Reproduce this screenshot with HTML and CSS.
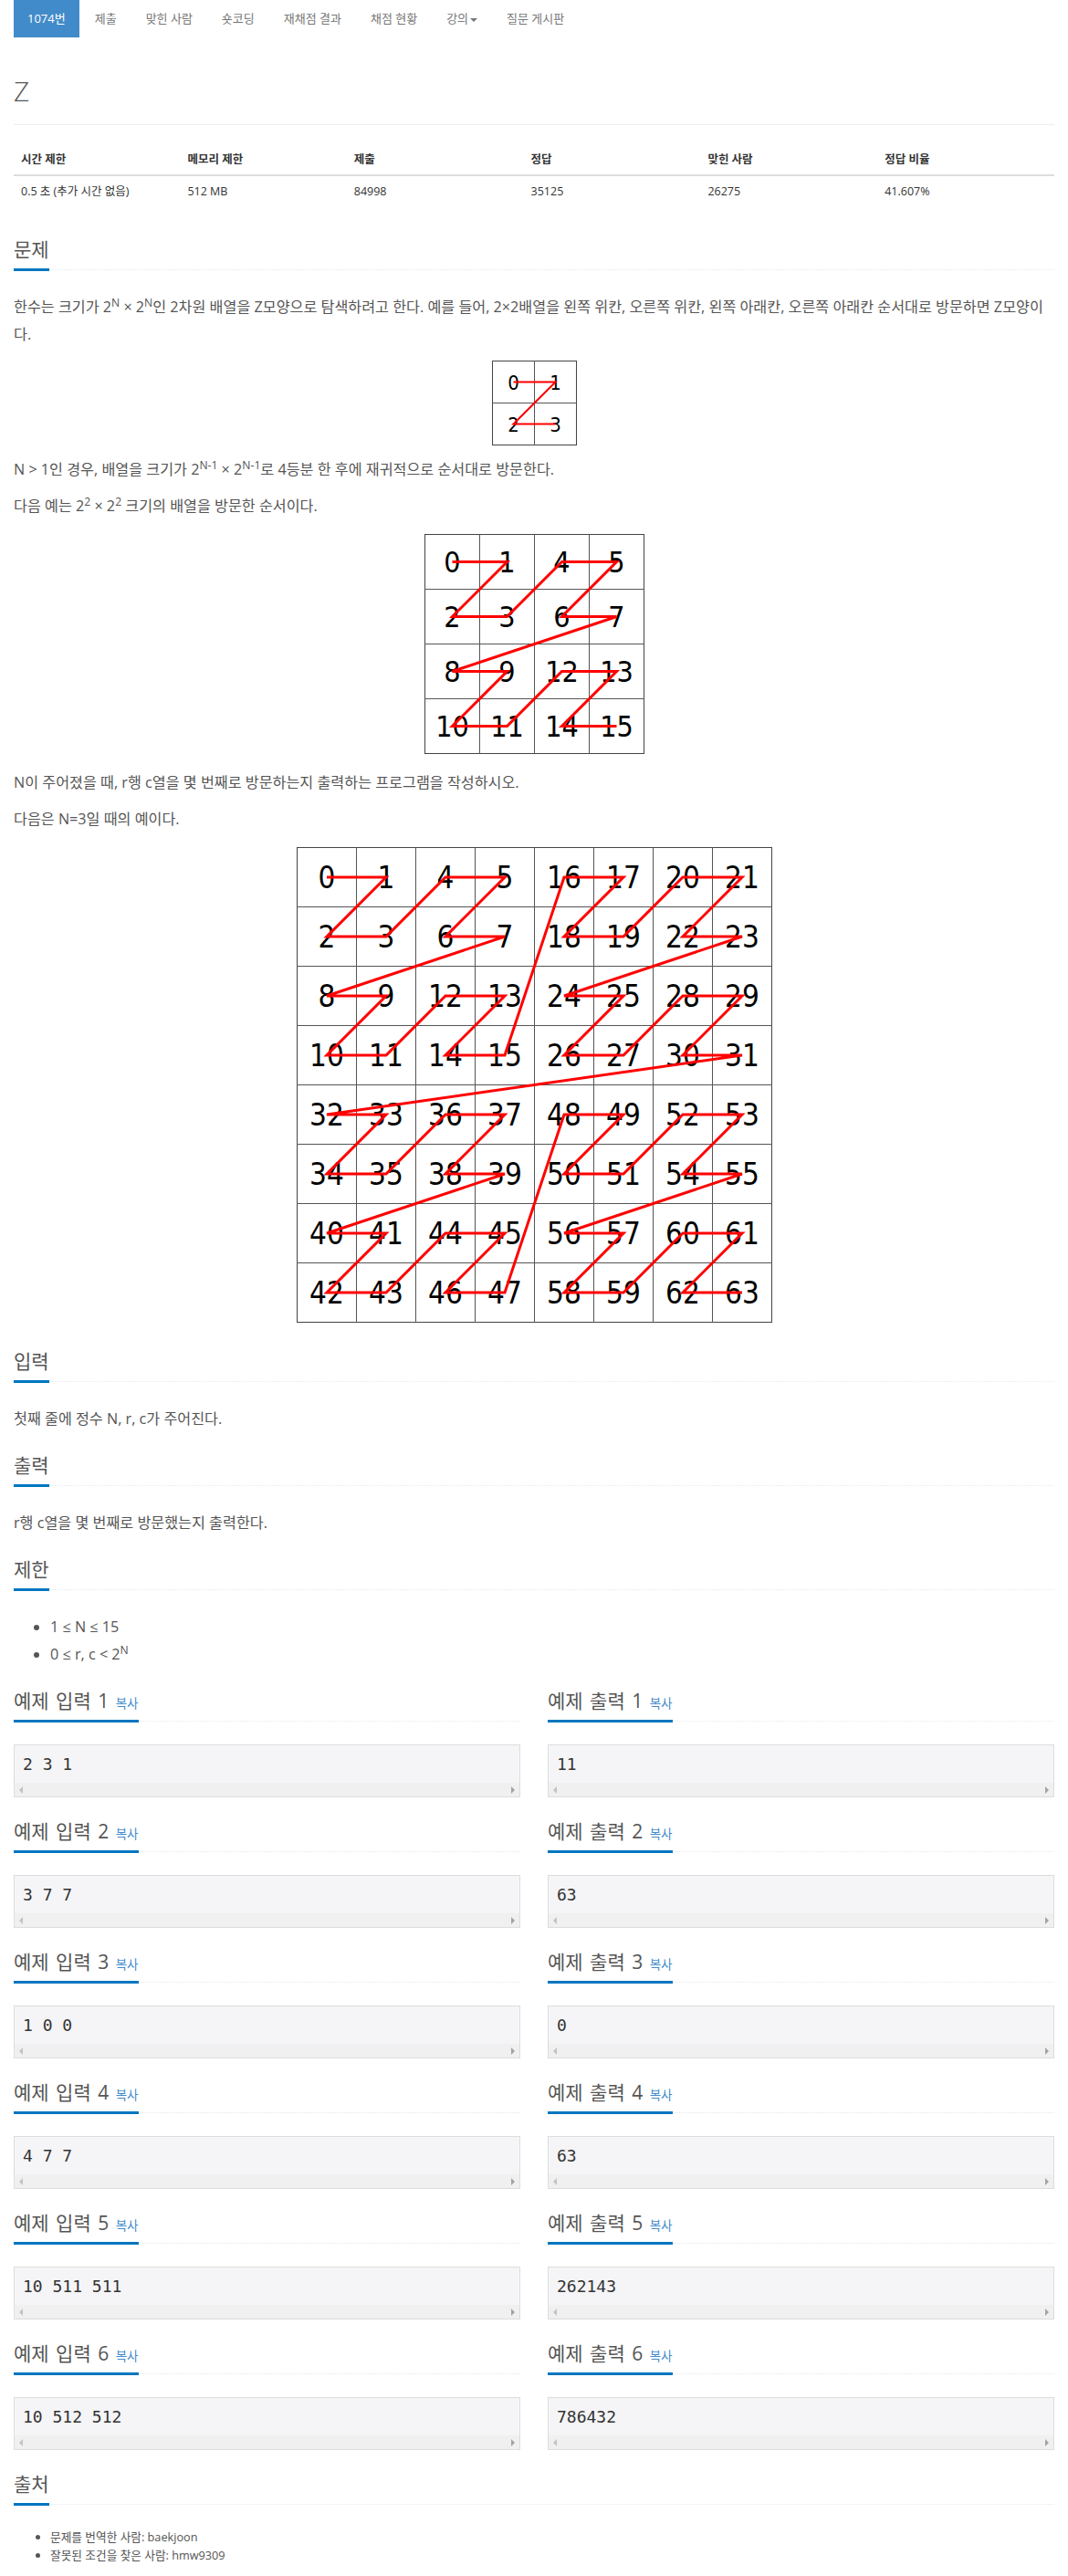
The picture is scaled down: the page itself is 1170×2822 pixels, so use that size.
FILE: index.html
```html
<!DOCTYPE html>
<html lang="ko">
<head>
<meta charset="utf-8">
<title>Z</title>
<link rel="stylesheet" href="styles.css">
</head>
<body>
<div class="container">
  <ul class="menu">
    <li class="active"><a>1074번</a></li>
    <li><a>제출</a></li>
    <li><a>맞힌 사람</a></li>
    <li><a>숏코딩</a></li>
    <li><a>재채점 결과</a></li>
    <li><a>채점 현황</a></li>
    <li><a>강의<span class="caret"></span></a></li>
    <li><a>질문 게시판</a></li>
  </ul>

  <div class="page-header"><h1>Z</h1></div>

  <table class="info">
    <thead>
      <tr>
        <th class="c16">시간 제한</th>
        <th class="c16">메모리 제한</th>
        <th class="c17">제출</th>
        <th class="c17">정답</th>
        <th class="c17">맞힌 사람</th>
        <th class="c17">정답 비율</th>
      </tr>
    </thead>
    <tbody>
      <tr>
        <td>0.5 초 (추가 시간 없음)</td>
        <td>512 MB</td>
        <td>84998</td>
        <td>35125</td>
        <td>26275</td>
        <td>41.607%</td>
      </tr>
    </tbody>
  </table>

  <section class="sec">
    <div class="headline"><h2>문제</h2></div>
    <div class="text">
      <p>한수는 크기가 2<sup>N</sup> × 2<sup>N</sup>인 2차원 배열을 Z모양으로 탐색하려고 한다. 예를 들어, 2×2배열을 왼쪽 위칸, 오른쪽 위칸, 왼쪽 아래칸, 오른쪽 아래칸 순서대로 방문하면 Z모양이다.</p>
      <div class="fig">
        <svg class="grid g2" width="93" height="93" viewBox="0 0 93 93">
          <rect x="0.5" y="0.5" width="92" height="92" class="outer"/>
          <line x1="46.5" y1="0" x2="46.5" y2="93" class="inner"/>
          <line x1="0" y1="46.5" x2="93" y2="46.5" class="inner"/>
          <g class="num n2">
            <text x="23.5" y="31.5">0</text><text x="69.5" y="31.5">1</text>
            <text x="23.5" y="77.5">2</text><text x="69.5" y="77.5">3</text>
          </g>
          <polyline class="zpath thin" points="23.5,23.5 69.5,23.5 23.5,69.5 69.5,69.5"/>
        </svg>
      </div>
      <p>N &gt; 1인 경우, 배열을 크기가 2<sup>N-1</sup> × 2<sup>N-1</sup>로 4등분 한 후에 재귀적으로 순서대로 방문한다.</p>
      <p>다음 예는 2<sup>2</sup> × 2<sup>2</sup> 크기의 배열을 방문한 순서이다.</p>
      <div class="fig">
        <svg class="grid g4" width="241" height="241" viewBox="0 0 241 241">
          <rect x="0.5" y="0.5" width="240" height="240" class="outer"/>
          <path class="inner" d="M60.5 0V241M120.5 0V241M180.5 0V241M0 60.5H241M0 120.5H241M0 180.5H241"/>
          <g class="num n4">
            <text x="30.5" y="42">0</text><text x="90.5" y="42">1</text><text x="150.5" y="42">4</text><text x="210.5" y="42">5</text>
            <text x="30.5" y="102">2</text><text x="90.5" y="102">3</text><text x="150.5" y="102">6</text><text x="210.5" y="102">7</text>
            <text x="30.5" y="162">8</text><text x="90.5" y="162">9</text><text x="150.5" y="162">12</text><text x="210.5" y="162">13</text>
            <text x="30.5" y="222">10</text><text x="90.5" y="222">11</text><text x="150.5" y="222">14</text><text x="210.5" y="222">15</text>
          </g>
          <polyline class="zpath" points="30.5,30.5 90.5,30.5 30.5,90.5 90.5,90.5 150.5,30.5 210.5,30.5 150.5,90.5 210.5,90.5 30.5,150.5 90.5,150.5 30.5,210.5 90.5,210.5 150.5,150.5 210.5,150.5 150.5,210.5 210.5,210.5"/>
        </svg>
      </div>
      <p>N이 주어졌을 때, r행 c열을 몇 번째로 방문하는지 출력하는 프로그램을 작성하시오.</p>
      <p>다음은 N=3일 때의 예이다.</p>
      <div class="fig">
        <svg class="grid g8" width="521" height="521" viewBox="0 0 521 521">
          <rect x="0.5" y="0.5" width="520" height="520" class="outer"/>
          <path class="inner" d="M65.5 0V521M130.5 0V521M195.5 0V521M260.5 0V521M325.5 0V521M390.5 0V521M455.5 0V521M0 65.5H521M0 130.5H521M0 195.5H521M0 260.5H521M0 325.5H521M0 390.5H521M0 455.5H521"/>
          <g class="num n8">
            <text x="33" y="45">0</text><text x="98" y="45">1</text><text x="163" y="45">4</text><text x="228" y="45">5</text><text x="293" y="45">16</text><text x="358" y="45">17</text><text x="423" y="45">20</text><text x="488" y="45">21</text>
            <text x="33" y="110">2</text><text x="98" y="110">3</text><text x="163" y="110">6</text><text x="228" y="110">7</text><text x="293" y="110">18</text><text x="358" y="110">19</text><text x="423" y="110">22</text><text x="488" y="110">23</text>
            <text x="33" y="175">8</text><text x="98" y="175">9</text><text x="163" y="175">12</text><text x="228" y="175">13</text><text x="293" y="175">24</text><text x="358" y="175">25</text><text x="423" y="175">28</text><text x="488" y="175">29</text>
            <text x="33" y="240">10</text><text x="98" y="240">11</text><text x="163" y="240">14</text><text x="228" y="240">15</text><text x="293" y="240">26</text><text x="358" y="240">27</text><text x="423" y="240">30</text><text x="488" y="240">31</text>
            <text x="33" y="305">32</text><text x="98" y="305">33</text><text x="163" y="305">36</text><text x="228" y="305">37</text><text x="293" y="305">48</text><text x="358" y="305">49</text><text x="423" y="305">52</text><text x="488" y="305">53</text>
            <text x="33" y="370">34</text><text x="98" y="370">35</text><text x="163" y="370">38</text><text x="228" y="370">39</text><text x="293" y="370">50</text><text x="358" y="370">51</text><text x="423" y="370">54</text><text x="488" y="370">55</text>
            <text x="33" y="435">40</text><text x="98" y="435">41</text><text x="163" y="435">44</text><text x="228" y="435">45</text><text x="293" y="435">56</text><text x="358" y="435">57</text><text x="423" y="435">60</text><text x="488" y="435">61</text>
            <text x="33" y="500">42</text><text x="98" y="500">43</text><text x="163" y="500">46</text><text x="228" y="500">47</text><text x="293" y="500">58</text><text x="358" y="500">59</text><text x="423" y="500">62</text><text x="488" y="500">63</text>
          </g>
          <polyline class="zpath" points="33,33 98,33 33,98 98,98 163,33 228,33 163,98 228,98 33,163 98,163 33,228 98,228 163,163 228,163 163,228 228,228 293,33 358,33 293,98 358,98 423,33 488,33 423,98 488,98 293,163 358,163 293,228 358,228 423,163 488,163 423,228 488,228 33,293 98,293 33,358 98,358 163,293 228,293 163,358 228,358 33,423 98,423 33,488 98,488 163,423 228,423 163,488 228,488 293,293 358,293 293,358 358,358 423,293 488,293 423,358 488,358 293,423 358,423 293,488 358,488 423,423 488,423 423,488 488,488"/>
        </svg>
      </div>
    </div>
  </section>

  <section class="sec">
    <div class="headline"><h2>입력</h2></div>
    <div class="text"><p>첫째 줄에 정수 N, r, c가 주어진다.</p></div>
  </section>

  <section class="sec">
    <div class="headline"><h2>출력</h2></div>
    <div class="text"><p>r행 c열을 몇 번째로 방문했는지 출력한다.</p></div>
  </section>

  <section class="sec">
    <div class="headline"><h2>제한</h2></div>
    <div class="text">
      <ul class="limits">
        <li>1 ≤ N ≤ 15</li>
        <li>0 ≤ r, c &lt; 2<sup>N</sup></li>
      </ul>
    </div>
  </section>

  <div class="samples">
    <section class="sec">
      <div class="headline"><h2>예제 입력 1 <span class="copy">복사</span></h2></div>
      <div class="pre"><pre>2 3 1</pre><div class="sbar"><i class="al"></i><i class="ar"></i></div></div>
    </section>
    <section class="sec">
      <div class="headline"><h2>예제 출력 1 <span class="copy">복사</span></h2></div>
      <div class="pre"><pre>11</pre><div class="sbar"><i class="al"></i><i class="ar"></i></div></div>
    </section>

    <section class="sec">
      <div class="headline"><h2>예제 입력 2 <span class="copy">복사</span></h2></div>
      <div class="pre"><pre>3 7 7</pre><div class="sbar"><i class="al"></i><i class="ar"></i></div></div>
    </section>
    <section class="sec">
      <div class="headline"><h2>예제 출력 2 <span class="copy">복사</span></h2></div>
      <div class="pre"><pre>63</pre><div class="sbar"><i class="al"></i><i class="ar"></i></div></div>
    </section>

    <section class="sec">
      <div class="headline"><h2>예제 입력 3 <span class="copy">복사</span></h2></div>
      <div class="pre"><pre>1 0 0</pre><div class="sbar"><i class="al"></i><i class="ar"></i></div></div>
    </section>
    <section class="sec">
      <div class="headline"><h2>예제 출력 3 <span class="copy">복사</span></h2></div>
      <div class="pre"><pre>0</pre><div class="sbar"><i class="al"></i><i class="ar"></i></div></div>
    </section>

    <section class="sec">
      <div class="headline"><h2>예제 입력 4 <span class="copy">복사</span></h2></div>
      <div class="pre"><pre>4 7 7</pre><div class="sbar"><i class="al"></i><i class="ar"></i></div></div>
    </section>
    <section class="sec">
      <div class="headline"><h2>예제 출력 4 <span class="copy">복사</span></h2></div>
      <div class="pre"><pre>63</pre><div class="sbar"><i class="al"></i><i class="ar"></i></div></div>
    </section>

    <section class="sec">
      <div class="headline"><h2>예제 입력 5 <span class="copy">복사</span></h2></div>
      <div class="pre"><pre>10 511 511</pre><div class="sbar"><i class="al"></i><i class="ar"></i></div></div>
    </section>
    <section class="sec">
      <div class="headline"><h2>예제 출력 5 <span class="copy">복사</span></h2></div>
      <div class="pre"><pre>262143</pre><div class="sbar"><i class="al"></i><i class="ar"></i></div></div>
    </section>

    <section class="sec">
      <div class="headline"><h2>예제 입력 6 <span class="copy">복사</span></h2></div>
      <div class="pre"><pre>10 512 512</pre><div class="sbar"><i class="al"></i><i class="ar"></i></div></div>
    </section>
    <section class="sec">
      <div class="headline"><h2>예제 출력 6 <span class="copy">복사</span></h2></div>
      <div class="pre"><pre>786432</pre><div class="sbar"><i class="al"></i><i class="ar"></i></div></div>
    </section>
  </div>

  <section class="sec">
    <div class="headline"><h2>출처</h2></div>
    <ul class="source">
      <li>문제를 번역한 사람: baekjoon</li>
      <li>잘못된 조건을 찾은 사람: hmw9309</li>
    </ul>
  </section>
</div>
</body>
</html>
```

FILE: styles.css
```css
* { box-sizing: border-box; }

html, body {
  margin: 0;
  padding: 0;
  background: #fff;
}

body {
  font-family: "Open Sans", "Noto Sans CJK KR", sans-serif;
  font-size: 12px;
  line-height: 1.42857;
  color: #555;
}

.container {
  width: 1170px;
  padding: 0 15px 20px;
}

/* top menu */
.menu {
  display: flex;
  gap: 2px;
  list-style: none;
  margin: 0;
  padding: 0;
}
.menu a {
  display: block;
  padding: 10px 15px;
  line-height: 21px;
  font-size: 13px;
  color: #777;
}
.menu .active a {
  background: #428bca;
  color: #fff;
}
.caret {
  display: inline-block;
  width: 0;
  height: 0;
  margin-left: 2px;
  vertical-align: middle;
  border-top: 4px solid #777;
  border-left: 4px solid transparent;
  border-right: 4px solid transparent;
}

/* title */
.page-header {
  margin: 42px 0 21px;
  padding-bottom: 20px;
  border-bottom: 1px solid #eee;
}
.page-header h1 {
  margin: 0;
  font-size: 30px;
  line-height: 33px;
  font-weight: 300;
  color: #555;
}

/* info table */
.info {
  width: 100%;
  border-collapse: collapse;
  margin-bottom: 21px;
  font-size: 12.5px;
  color: #333;
}
.info th,
.info td {
  padding: 8px;
  line-height: 17px;
  text-align: left;
}
.info th {
  font-weight: 700;
  border-bottom: 2px solid #ddd;
}
.c16 { width: 16%; }
.c17 { width: 17%; }

/* sections */
.sec {
  display: flow-root;
}
.headline {
  display: flex;
  margin: 10px 0 25px;
  border-bottom: 1px dotted #e4e9f0;
}
.headline h2 {
  margin: 0 0 -2px;
  padding-bottom: 5px;
  border-bottom: 3px solid #0076c0;
  font-size: 21px;
  line-height: 32px;
  font-weight: 400;
  word-spacing: 2px;
  color: #555;
}
.copy {
  font-size: 13.5px;
  line-height: 1;
  word-spacing: 0;
  color: #428bca;
}

.text {
  font-size: 16.2px;
  line-height: 30px;
  color: #555;
}
.text p {
  margin: 0 0 10px;
}
sup {
  font-size: 75%;
  line-height: 0;
  vertical-align: baseline;
  position: relative;
  top: -0.5em;
}
.fig {
  display: flow-root;
  margin: 0 0 10px;
}
.grid {
  display: block;
  margin: 6px auto 6px;
}
.grid.g2 {
  margin: 4px auto 1px;
}
.grid .outer {
  fill: #fff;
  stroke: #444;
  stroke-width: 1;
}
.grid .inner {
  fill: none;
  stroke: #555;
  stroke-width: 1;
}
.num text {
  font-family: "DejaVu Sans Condensed", "DejaVu Sans", sans-serif;
  font-stretch: condensed;
  text-anchor: middle;
  fill: #000;
}
.n2 text { font-size: 22px; }
.n4 text { font-size: 32px; }
.n8 text { font-size: 33px; }
.zpath {
  fill: none;
  stroke: #ff0000;
  stroke-width: 3;
  stroke-linejoin: miter;
}
.zpath.thin { stroke-width: 2; }

.limits {
  margin: 0 0 10px;
  padding-left: 40px;
}

/* samples */
.samples {
  display: grid;
  grid-template-columns: 1fr 1fr;
  column-gap: 30px;
}
.pre {
  margin-bottom: 11px;
  border: 1px solid #ddd;
  background: #f5f5f7;
}
.pre pre {
  margin: 0;
  padding: 10px 9px;
  font-family: "DejaVu Sans Mono", monospace;
  font-size: 18px;
  line-height: 21px;
  color: #333;
}
.sbar {
  display: flex;
  justify-content: space-between;
  align-items: center;
  height: 15px;
  padding: 0 5px;
  background: #f0f0f0;
}
.sbar i {
  display: block;
  width: 0;
  height: 0;
  border-top: 4px solid transparent;
  border-bottom: 4px solid transparent;
}
.sbar .al { border-right: 4px solid #c3c3c3; }
.sbar .ar { border-left: 4px solid #a3a3a3; }

/* source */
.source {
  margin: 0;
  padding-left: 40px;
  font-size: 12.7px;
  line-height: 20px;
  color: #555;
}
```
